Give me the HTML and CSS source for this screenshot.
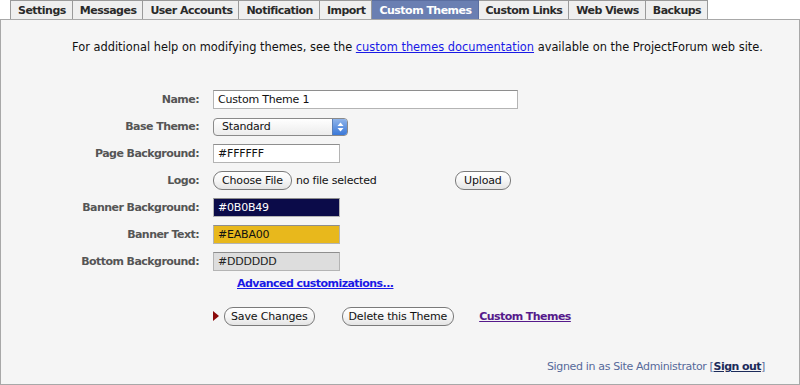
FILE: index.html
```html
<!DOCTYPE html>
<html>
<head>
<meta charset="utf-8">
<title>Custom Themes</title>
<link rel="stylesheet" href="styles.css">
</head>
<body>
<div class="tabs">
  <span class="tab">Settings</span><span class="tab">Messages</span><span class="tab">User Accounts</span><span class="tab">Notification</span><span class="tab">Import</span><span class="tab active">Custom Themes</span><span class="tab">Custom Links</span><span class="tab">Web Views</span><span class="tab">Backups</span>
</div>
<div class="panel">
  <p class="intro">For additional help on modifying themes, see the <a class="link" href="#">custom themes documentation</a> available on the ProjectForum web site.</p>
  <div class="form">
    <div class="label">Name:</div>
    <div class="field"><span class="input wide">Custom Theme 1</span></div>
    <div class="label">Base Theme:</div>
    <div class="field"><span class="select"><span class="select-text">Standard</span><span class="select-arrows"><svg width="7" height="10" viewBox="0 0 7 10"><path d="M3.5 0.5 L6.5 4 L0.5 4 Z" fill="#fff"/><path d="M3.5 9.5 L6.5 6 L0.5 6 Z" fill="#fff"/></svg></span></span></div>
    <div class="label">Page Background:</div>
    <div class="field"><span class="input color">#FFFFFF</span></div>
    <div class="label">Logo:</div>
    <div class="field"><span class="file"><span class="btn">Choose File</span><span class="file-note">no file selected</span></span><span class="btn">Upload</span></div>
    <div class="label">Banner Background:</div>
    <div class="field"><span class="input color navy">#0B0B49</span></div>
    <div class="label">Banner Text:</div>
    <div class="field"><span class="input color gold">#EABA00</span></div>
    <div class="label">Bottom Background:</div>
    <div class="field"><span class="input color grey">#DDDDDD</span></div>
  </div>
  <div class="advanced"><a class="link bold" href="#">Advanced customizations...</a></div>
  <div class="actions">
    <span class="marker"></span>
    <span class="btn narrow">Save Changes</span>
    <span class="btn narrow delete">Delete this Theme</span>
    <a class="visited" href="#">Custom Themes</a>
  </div>
  <div class="footer">Signed in as Site Administrator [<a class="signout" href="#">Sign out</a>]</div>
</div>
</body>
</html>
```
FILE: styles.css
```css
html, body {
  margin: 0;
  padding: 0;
  background: #ffffff;
  font-family: "DejaVu Sans", Verdana, sans-serif;
  font-size: 11px;
  color: #111;
}

.tabs {
  display: flex;
  padding-left: 10px;
  height: 19px;
}

.tab {
  display: flex;
  align-items: center;
  padding: 0 6px 0 7px;
  height: 18px;
  border: 1px solid #9a9a9a;
  border-bottom: none;
  border-left: none;
  background: #efefef;
  color: #2a2a2a;
  font-weight: bold;
  font-size: 11px;
  letter-spacing: -0.52px;
  white-space: nowrap;
}

.tab:first-child {
  border-left: 1px solid #9a9a9a;
}

.tab.active {
  background: #6a7fb2;
  color: #ffffff;
  border-color: #5a6ea0;
}

.panel {
  display: flex;
  flex-direction: column;
  height: 364px;
  border: 1px solid #a8a8a8;
  background: #f5f5f5;
}

.intro {
  margin: 20px 0 0 0;
  padding-left: 35px;
  text-align: center;
  font-size: 11.4px;
  line-height: 14px;
  color: #111;
}

.link {
  color: #1a1ae6;
  text-decoration: underline;
}

.bold {
  font-weight: bold;
  letter-spacing: -0.55px;
}

.form {
  display: grid;
  grid-template-columns: 198px auto;
  column-gap: 14px;
  grid-auto-rows: 27px;
  margin-top: 32px;
  letter-spacing: -0.2px;
}

.label {
  display: flex;
  align-items: center;
  justify-content: flex-end;
  font-weight: bold;
  letter-spacing: -0.55px;
  color: #555555;
}

.field {
  display: flex;
  align-items: center;
}

.input {
  display: flex;
  align-items: center;
  box-sizing: border-box;
  height: 19px;
  padding: 0 4px;
  background: #ffffff;
  border: 1px solid #b4b4b4;
  border-top-color: #8e8e8e;
  color: #111;
  font-size: 11px;
}

.input.wide {
  width: 305px;
}

.input.color {
  width: 127px;
}

.input.navy {
  background: #0b0b49;
  color: #ffffff;
}

.input.gold {
  background: #e8b81c;
}

.input.grey {
  background: #dddddd;
  color: #222;
}

.select {
  display: flex;
  align-items: center;
  box-sizing: border-box;
  width: 135px;
  height: 18px;
  border: 1px solid #8a8a8a;
  border-radius: 4px;
  background: linear-gradient(#ffffff, #ececec);
  overflow: hidden;
}

.select-text {
  flex: 1;
  padding-left: 8px;
  color: #111;
}

.select-arrows {
  display: flex;
  align-items: center;
  justify-content: center;
  width: 14px;
  height: 100%;
  background: linear-gradient(#8fb4ea, #3a78d8);
  border-left: 1px solid #5a7fb8;
}

.btn {
  display: inline-flex;
  align-items: center;
  box-sizing: border-box;
  height: 19px;
  padding: 0 8px;
  border: 1px solid #7a7a7a;
  border-radius: 9px;
  background: linear-gradient(#ffffff 0%, #f6f6f6 50%, #e4e4e4 100%);
  color: #111;
  font-size: 11px;
  letter-spacing: -0.15px;
  white-space: nowrap;
}

.btn.narrow {
  padding: 0 6px;
}

.file {
  display: flex;
  align-items: center;
  width: 242px;
}

.file-note {
  margin-left: 4px;
}

.advanced {
  margin: 2px 0 0 236px;
  line-height: 14px;
}

.actions {
  display: flex;
  align-items: center;
  height: 20px;
  margin: 15px 0 0 212px;
}

.marker {
  width: 0;
  height: 0;
  border-top: 5px solid transparent;
  border-bottom: 5px solid transparent;
  border-left: 6px solid #8b0a0a;
  margin-right: 5px;
}

.delete {
  margin-left: 27px;
}

.visited {
  margin-left: 25px;
  color: #551a8b;
  font-weight: bold;
  letter-spacing: -0.55px;
  text-decoration: underline;
}

.footer {
  margin-top: auto;
  margin-bottom: 10px;
  align-self: flex-end;
  padding-right: 34px;
  color: #56699a;
  letter-spacing: -0.35px;
  line-height: 14px;
}

.signout {
  color: #1c2b5a;
  font-weight: bold;
  letter-spacing: -0.55px;
  text-decoration: underline;
}
```
